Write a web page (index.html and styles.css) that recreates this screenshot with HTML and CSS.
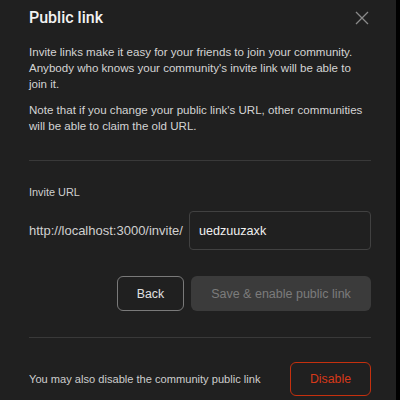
FILE: index.html
```html
<!DOCTYPE html>
<html>
<head>
<meta charset="utf-8">
<link rel="stylesheet" href="styles.css">
</head>
<body>
<div class="modal">
  <div class="header">
    <h1 class="title">Public link</h1>
    <button class="close" aria-label="Close">
      <svg width="14" height="14" viewBox="0 0 14 14"><path d="M1 1L13 13M13 1L1 13" stroke="#8a8a8a" stroke-width="1.3" fill="none"/></svg>
    </button>
  </div>
  <p class="text first">Invite links make it easy for your friends to join your community. Anybody who knows your community's invite link will be able to join it.</p>
  <p class="text">Note that if you change your public link's URL, other communities will be able to claim the old URL.</p>
  <hr class="divider">
  <div class="label">Invite URL</div>
  <div class="url-row">
    <span class="prefix">http://localhost:3000/invite/</span>
    <div class="input">uedzuuzaxk</div>
  </div>
  <div class="actions">
    <button class="btn back">Back</button>
    <button class="btn save">Save &amp; enable public link</button>
  </div>
  <hr class="divider divider2">
  <div class="disable-row">
    <span class="muted">You may also disable the community public link</span>
    <button class="btn disable">Disable</button>
  </div>
</div>
</body>
</html>
```
FILE: styles.css
```css
html, body {
  margin: 0;
  padding: 0;
  background: #000;
}
body {
  width: 400px;
  height: 400px;
  overflow: hidden;
  font-family: "Liberation Sans", Arial, sans-serif;
}
.modal {
  width: 396px;
  height: 400px;
  box-sizing: border-box;
  background: #202020;
  padding: 7px 25px 0 29px;
  color: #d6d6d6;
}
.header {
  display: flex;
  align-items: center;
  justify-content: space-between;
  height: 22px;
}
.title {
  margin: 0;
  font-family: Roboto, "Liberation Sans", sans-serif;
  font-size: 16px;
  line-height: 22px;
  font-weight: 500;
  color: #f2f2f2;
}
.close {
  background: none;
  border: 0;
  padding: 0;
  margin-right: 2.5px;
  width: 14px;
  height: 14px;
  display: flex;
}
.text {
  margin: 10px 0 0 0;
  font-size: 11.55px;
  line-height: 16px;
  color: #d4d4d4;
}
.text.first {
  margin-top: 15px;
}
.divider {
  border: 0;
  border-top: 1px solid #393939;
  margin: 26px 0 0 0;
}
.label {
  margin-top: 23px;
  font-size: 10.9px;
  line-height: 16px;
  color: #cfcfcf;
}
.url-row {
  display: flex;
  align-items: center;
  justify-content: space-between;
  margin-top: 11px;
}
.prefix {
  font-size: 13px;
  color: #d0d0d0;
  white-space: nowrap;
}
.input {
  width: 182px;
  height: 39px;
  box-sizing: border-box;
  border: 1px solid #414141;
  border-radius: 4px;
  padding-left: 9px;
  display: flex;
  align-items: center;
  font-size: 12.6px;
  color: #f0f0f0;
}
.actions {
  display: flex;
  justify-content: flex-end;
  gap: 7px;
  margin-top: 26px;
}
.btn {
  font-family: "Liberation Sans", Arial, sans-serif;
  height: 35px;
  box-sizing: border-box;
  border-radius: 6px;
  background: none;
  padding: 0;
}
.back {
  width: 67px;
  border: 1px solid #7a7a7a;
  color: #e0e0e0;
  font-size: 12.3px;
}
.save {
  width: 180px;
  border: 0;
  background: #3b3b3b;
  color: #7c7c7c;
  font-size: 12.5px;
}
.divider2 {
  margin-top: 26px;
}
.disable-row {
  display: flex;
  align-items: center;
  justify-content: space-between;
  margin-top: 24px;
}
.muted {
  font-size: 11.1px;
  color: #cdcdcd;
}
.disable {
  width: 81px;
  height: 34px;
  border: 1px solid #c4300e;
  color: #d6391a;
  font-size: 12.3px;
}
```
